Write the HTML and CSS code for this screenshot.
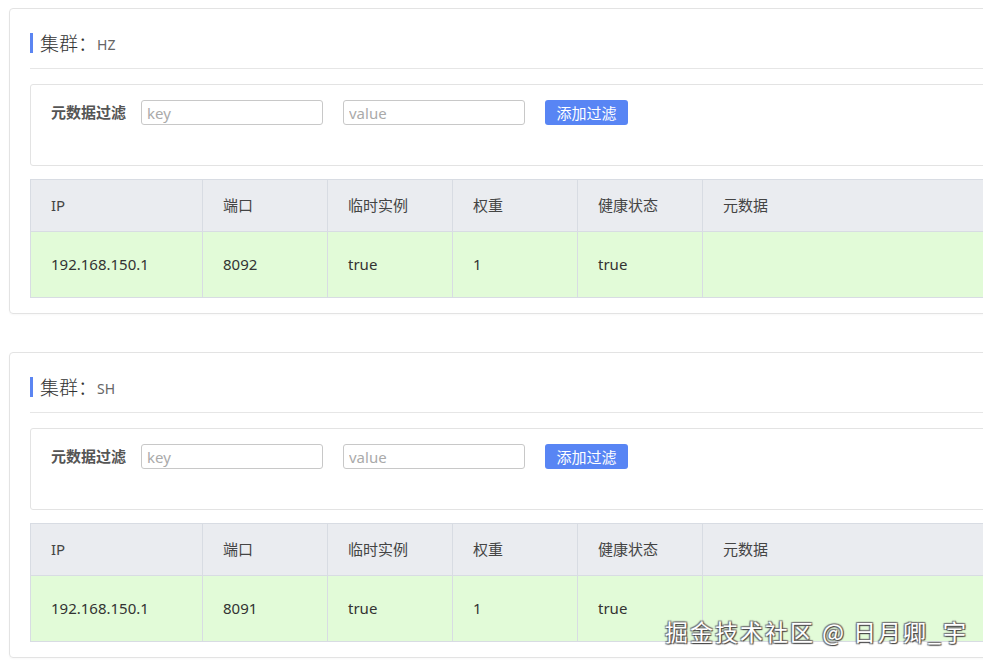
FILE: index.html
```html
<!DOCTYPE html>
<html lang="zh">
<head>
<meta charset="utf-8">
<link rel="stylesheet" href="styles.css">
</head>
<body>
<div class="page">
  <section class="card">
    <h2 class="title"><span class="title-main">集群：</span><span class="title-sub">HZ</span></h2>
    <div class="divider"></div>
    <div class="filter">
      <span class="filter-label">元数据过滤</span>
      <input class="filter-input" placeholder="key">
      <input class="filter-input" placeholder="value">
      <button class="btn">添加过滤</button>
    </div>
    <table class="grid">
      <colgroup><col class="c-ip"><col class="c-n"><col class="c-n"><col class="c-n"><col class="c-n"><col></colgroup>
      <thead><tr><th>IP</th><th>端口</th><th>临时实例</th><th>权重</th><th>健康状态</th><th>元数据</th></tr></thead>
      <tbody><tr><td>192.168.150.1</td><td>8092</td><td>true</td><td>1</td><td>true</td><td></td></tr></tbody>
    </table>
  </section>
  <section class="card">
    <h2 class="title"><span class="title-main">集群：</span><span class="title-sub">SH</span></h2>
    <div class="divider"></div>
    <div class="filter">
      <span class="filter-label">元数据过滤</span>
      <input class="filter-input" placeholder="key">
      <input class="filter-input" placeholder="value">
      <button class="btn">添加过滤</button>
    </div>
    <table class="grid">
      <colgroup><col class="c-ip"><col class="c-n"><col class="c-n"><col class="c-n"><col class="c-n"><col></colgroup>
      <thead><tr><th>IP</th><th>端口</th><th>临时实例</th><th>权重</th><th>健康状态</th><th>元数据</th></tr></thead>
      <tbody><tr><td>192.168.150.1</td><td>8091</td><td>true</td><td>1</td><td>true</td><td></td></tr></tbody>
    </table>
  </section>
</div>
<div class="watermark">掘金技术社区 @ 日月卿_宇</div>
</body>
</html>
```
FILE: styles.css
```css
html, body {
  margin: 0;
  padding: 0;
  background: #fff;
  overflow: hidden;
}
body {
  font-family: "Noto Sans", "Noto Sans CJK SC", sans-serif;
  color: #333;
  font-size: 15px;
  position: relative;
  width: 983px;
  height: 665px;
}
.page {
  padding: 8px 0 0 9px;
  display: flex;
  flex-direction: column;
  gap: 38px;
}
.card {
  width: 1010px;
  box-sizing: border-box;
  border: 1px solid #e3e3e3;
  border-radius: 4px;
  padding: 24px 20px 15px 20px;
  box-shadow: 0 1px 2px rgba(0,0,0,0.03);
}
.title {
  margin: 0;
  height: 20px;
  display: flex;
  align-items: center;
  border-left: 3px solid #5b85f2;
  padding-left: 7px;
  font-weight: normal;
}
.title-main {
  font-size: 19px;
  font-weight: 300;
  color: #333;
  line-height: 20px;
  font-family: "Noto Sans CJK SC", sans-serif;
}
.title-sub {
  font-size: 14px;
  color: #666;
  margin-top: 3px;
}
.divider {
  height: 1px;
  background: #e6e6e6;
  margin: 15px 0 15px 0;
}
.filter {
  border: 1px solid #e3e3e3;
  border-radius: 3px;
  display: flex;
  align-items: flex-start;
  padding: 15px 20px 0 20px;
  box-sizing: border-box;
  height: 82px;
}
.filter-label {
  font-weight: bold;
  color: #555;
  font-size: 15px;
  line-height: 24px;
  width: 90px;
  font-family: "Noto Sans CJK SC", sans-serif;
}
.filter-input {
  width: 182px;
  height: 25px;
  box-sizing: border-box;
  border: 1px solid #c8c8c8;
  border-radius: 3px;
  padding: 0 5px;
  font-family: "Noto Sans", sans-serif;
  font-size: 15px;
  color: #333;
  margin-right: 20px;
  outline: none;
}
.filter-input::placeholder {
  color: #aaa;
}
.btn {
  width: 83px;
  height: 25px;
  border: none;
  border-radius: 3px;
  background: #5885f4;
  color: #fff;
  font-size: 15px;
  font-family: "Noto Sans CJK SC", sans-serif;
  padding: 0;
  line-height: 25px;
}
.grid {
  margin-top: 13px;
  width: 100%;
  border-collapse: collapse;
  table-layout: fixed;
  line-height: 20px;
}
.c-ip { width: 172px; }
.c-n { width: 125px; }
.grid th, .grid td {
  text-align: left;
  padding: 0 0 2px 20px;
  border: 1px solid #d8dce3;
  font-weight: normal;
}
.grid th {
  background: #eaecf0;
  height: 49px;
  color: #444;
}
.grid td {
  background: #e2fbd8;
  height: 63px;
  color: #333;
}
.watermark {
  position: absolute;
  left: 665px;
  top: 614px;
  font-family: "Noto Sans CJK SC", sans-serif;
  font-size: 23px;
  color: #fff;
  letter-spacing: 2px;
  text-shadow: 1px 1px 1px #444, -1px -1px 1px #777, 1px -1px 1px #777, -1px 1px 1px #777;
}
```
